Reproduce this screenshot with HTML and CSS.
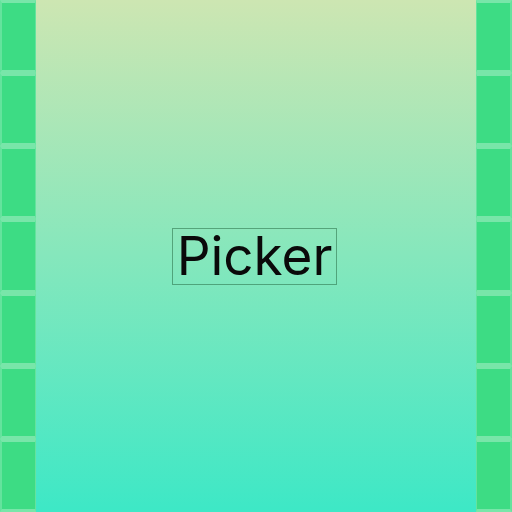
FILE: index.html
```html
<!DOCTYPE html>
<html>
<head>
<meta charset="utf-8">
<link rel="stylesheet" href="styles.css">
</head>
<body>
<div class="app">
  <div class="strip strip-left">
    <div class="cell"></div><div class="cell"></div><div class="cell"></div><div class="cell"></div><div class="cell"></div><div class="cell"></div><div class="cell"></div>
  </div>
  <main class="stage">
    <span class="label">Picker</span>
  </main>
  <div class="strip strip-right">
    <div class="cell"></div><div class="cell"></div><div class="cell"></div><div class="cell"></div><div class="cell"></div><div class="cell"></div><div class="cell"></div>
  </div>
</div>
</body>
</html>
```
FILE: styles.css
```css
html, body {
  margin: 0;
  padding: 0;
  width: 512px;
  height: 512px;
  overflow: hidden;
}
.app {
  display: flex;
  width: 512px;
  height: 512px;
}
.strip {
  width: 36px;
  flex: 0 0 36px;
  display: flex;
  flex-direction: column;
  background: #3ddc84;
}
.cell {
  flex: 1 1 0;
  box-sizing: border-box;
  background: #3ddc84;
  border-top: 3px solid rgba(255,255,255,0.3);
  border-bottom: 3px solid rgba(255,255,255,0.3);
  background-clip: padding-box;
}
.strip-left .cell {
  border-left: 2px solid rgba(255,255,255,0.2);
  border-right: 1px solid rgba(255,255,255,0.2);
}
.strip-right .cell {
  border-left: 1px solid rgba(255,255,255,0.2);
  border-right: 2px solid rgba(255,255,255,0.2);
}
.stage {
  flex: 1 1 auto;
  display: flex;
  align-items: center;
  justify-content: center;
  background: linear-gradient(to bottom, #cde6b2, #3de8c6);
}
.label {
  font-family: Inter, Roboto, "Liberation Sans", sans-serif;
  font-size: 53px;
  line-height: 55px;
  color: #0a0a0a;
  border: 1px solid rgba(40,110,70,0.55);
  padding: 0 4px 0 4px;
  margin-left: -3px;
}
```
